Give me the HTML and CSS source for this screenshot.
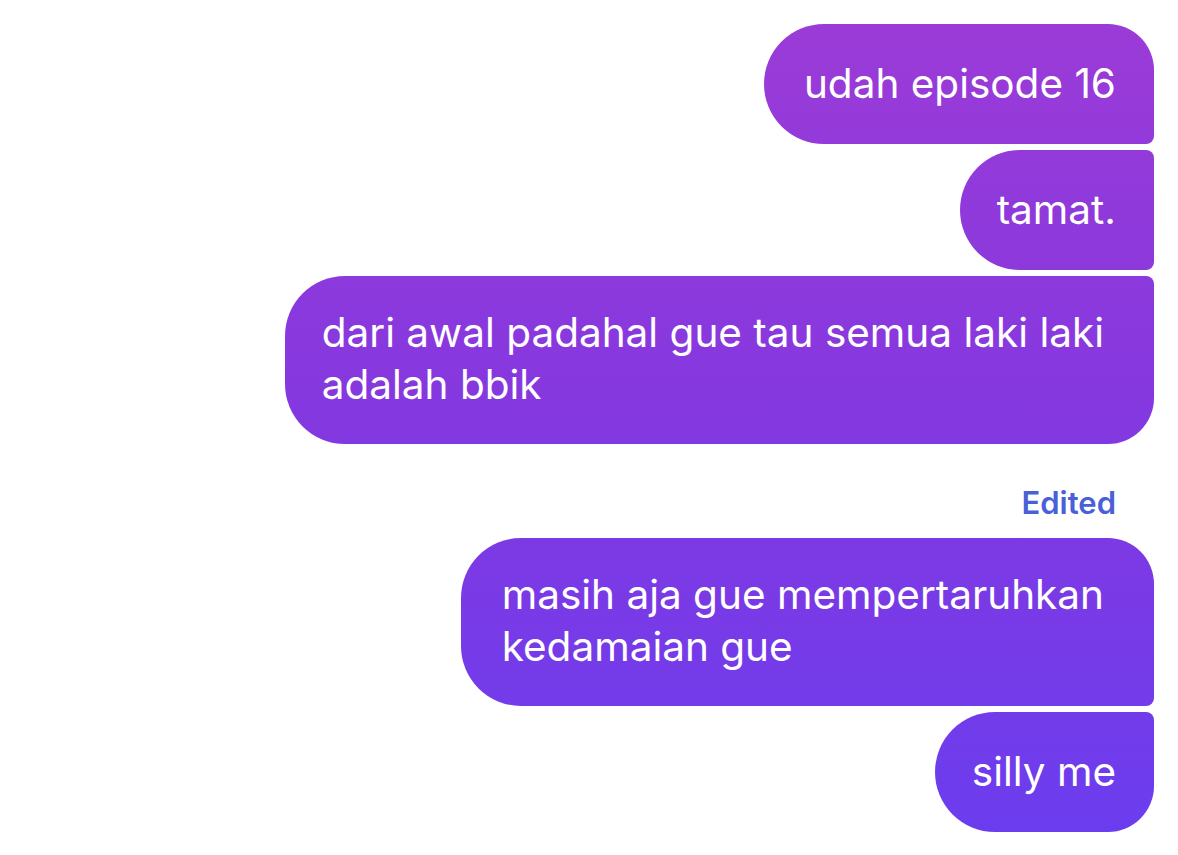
FILE: index.html
```html
<!DOCTYPE html>
<html lang="id">
<head>
<meta charset="utf-8">
<link rel="stylesheet" href="styles.css">
</head>
<body>
<div class="thread">
  <div class="bubble b-first">udah episode 16</div>
  <div class="bubble b-mid">tamat.</div>
  <div class="bubble b-last b-wrap">dari awal padahal gue tau semua laki laki<br>adalah bbik</div>
  <div class="edited">Edited</div>
  <div class="bubble b-first b-wrap b-wrap2">masih aja gue mempertaruhkan<br>kedamaian gue</div>
  <div class="bubble b-last">silly me</div>
</div>
</body>
</html>
```
FILE: styles.css
```css
html, body {
  margin: 0;
  padding: 0;
  background: #ffffff;
}
body {
  font-family: Inter, "Noto Sans", "Liberation Sans", sans-serif;
  width: 1178px;
  height: 855px;
  overflow: hidden;
}
.thread {
  display: flex;
  flex-direction: column;
  align-items: flex-end;
  padding: 24px 24px 0 0;
}
.bubble {
  box-sizing: border-box;
  min-height: 120px;
  display: flex;
  align-items: center;
  padding: 31px 38px 32px 37px;
  color: #ffffff;
  font-size: 40.5px;
  line-height: 52px;
  background: linear-gradient(180deg, #9c3bd7 0px, #8538df 400px, #6a3def 855px);
  background-attachment: fixed;
  border-radius: 60px 8px 8px 60px;
  margin-bottom: 6px;
}
.b-first {
  border-radius: 60px 46px 8px 60px;
  padding-left: 40px;
}
.b-wrap {
  padding-left: 37px;
  padding-right: 50px;
  padding-bottom: 33px;
}
.b-wrap2 {
  padding-left: 41px;
}
.b-mid {
  border-radius: 60px 8px 8px 60px;
}
.b-last {
  border-radius: 60px 8px 46px 60px;
}
.edited {
  margin-top: 36px;
  margin-right: 38px;
  margin-bottom: 18px;
  font-size: 31px;
  line-height: 34px;
  font-weight: 600;
  color: #4a5fd8;
}
```
